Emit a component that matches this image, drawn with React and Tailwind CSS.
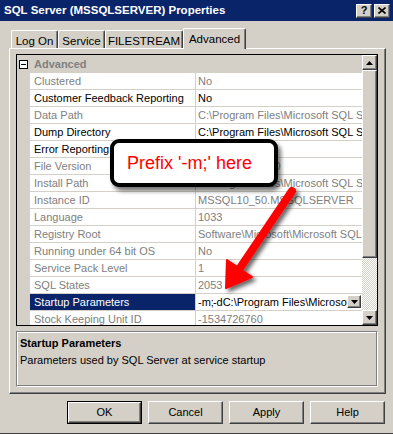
import React from 'react';

const FONT = { fontFamily: '"Liberation Sans", Arial, sans-serif' };

const rows = [
  ['Clustered', 'No', true],
  ['Customer Feedback Reporting', 'No', false],
  ['Data Path', 'C:\\Program Files\\Microsoft SQL Server\\MSSQL10_50.MSSQLSERVER\\MSSQL\\DATA', true],
  ['Dump Directory', 'C:\\Program Files\\Microsoft SQL Server\\MSSQL10_50.MSSQLSERVER\\MSSQL\\LOG', false],
  ['Error Reporting', 'No', false],
  ['File Version', '2009.100.2500.0', true],
  ['Install Path', 'C:\\Program Files\\Microsoft SQL Server\\MSSQL10_50.MSSQLSERVER\\MSSQL', true],
  ['Instance ID', 'MSSQL10_50.MSSQLSERVER', true],
  ['Language', '1033', true],
  ['Registry Root', 'Software\\Microsoft\\Microsoft SQL Server\\MSSQL10_50.MSSQLSERVER', true],
  ['Running under 64 bit OS', 'No', true],
  ['Service Pack Level', '1', true],
  ['SQL States', '2053', true],
];

// classic raised 3D box (buttons, thumbs)
const raised =
  'bg-[#d4d0c8] border border-t-white border-l-white border-r-[#404040] border-b-[#404040] shadow-[inset_-1px_-1px_#808080]';

function Arrow({ down }) {
  return (
    <svg width="7" height="4" viewBox="0 0 7 4">
      <path d={down ? 'M0 0h7L3.5 4z' : 'M0 4h7L3.5 0z'} fill="#000" />
    </svg>
  );
}

function Row({ label, value, gray }) {
  return (
    <div className="flex h-[17px] shrink-0">
      <div className="w-[13px] bg-[#d4d0c8]" />
      <div
        className={`w-[166px] pl-[4px] border-r border-b border-[#d4d0c8] bg-white leading-[16px] whitespace-nowrap overflow-hidden ${
          gray ? 'text-[#808080]' : 'text-black'
        }`}
      >
        {label}
      </div>
      <div
        className={`w-[166px] pl-[2px] border-b border-[#d4d0c8] bg-white leading-[16px] whitespace-nowrap overflow-hidden ${
          gray ? 'text-[#808080]' : 'text-black'
        }`}
      >
        {value}
      </div>
    </div>
  );
}

function Tab({ label, width, active }) {
  return (
    <div
      className={`flex items-start justify-center bg-[#d4d0c8] border-t border-l border-t-white border-l-white border-r border-r-[#404040] rounded-t-[2px] shadow-[inset_-1px_0_#808080] text-[11.5px] ${
        active ? 'h-[21px] -mb-px relative z-10 pt-[2px]' : 'h-[18px] pt-[2px]'
      }`}
      style={{ width }}
    >
      {label}
    </div>
  );
}

export default function App() {
  return (
    <div
      className="relative w-[393px] h-[434px] bg-[#d4d0c8] overflow-hidden flex flex-col text-[11px] text-black border-b border-b-[#404040]"
      style={FONT}
    >
      {/* title bar */}
      <div className="h-[21px] shrink-0 bg-[#0a246a] flex items-center pl-[4px] pr-[3px]">
        <span className="text-white font-bold text-[11.5px] flex-1">SQL Server (MSSQLSERVER) Properties</span>
        <div className={`${raised} w-[16px] h-[14px] flex items-center justify-center font-bold text-[11px] leading-none`}>?</div>
        <div className={`${raised} w-[16px] h-[14px] ml-[2px] flex items-center justify-center`}>
          <svg width="8" height="7" viewBox="0 0 8 7">
            <path d="M0.5 0.5L7.5 6.5M7.5 0.5L0.5 6.5" stroke="#000" strokeWidth="1.6" />
          </svg>
        </div>
      </div>

      {/* tabs */}
      <div className="mt-[7px] h-[20px] flex items-end pl-[11px] shrink-0">
        <Tab label="Log On" width={47} />
        <Tab label="Service" width={47} />
        <Tab label="FILESTREAM" width={78} />
        <Tab label="Advanced" width={63} active />
      </div>

      {/* tab page */}
      <div className="ml-[9px] w-[377px] h-[346px] shrink-0 flex flex-col gap-[5px] pt-[5px] pl-[6px] border border-t-white border-l-white border-r-[#404040] border-b-[#404040] shadow-[inset_-1px_-1px_#808080]">
        {/* property grid */}
        <div className="w-[362px] h-[272px] border border-black flex overflow-hidden bg-[#d4d0c8]">
          <div className="w-[345px] flex flex-col overflow-hidden">
            <div className="h-[18px] shrink-0 flex items-center bg-[#d4d0c8]">
              <div className="w-[13px] flex justify-center">
                <div className="w-[9px] h-[9px] border border-black bg-white flex items-center justify-center">
                  <div className="w-[5px] h-px bg-black" />
                </div>
              </div>
              <span className="pl-[4px] font-bold text-[#808080]">Advanced</span>
            </div>
            {rows.map(([l, v, g]) => (
              <Row key={l} label={l} value={v} gray={g} />
            ))}
            {/* selected row */}
            <div className="flex h-[17px] shrink-0">
              <div className="w-[13px] bg-[#d4d0c8]" />
              <div className="w-[166px] pl-[4px] border-r border-b border-[#d4d0c8] bg-[#0a246a] text-white leading-[16px] whitespace-nowrap overflow-hidden">
                Startup Parameters
              </div>
              <div className="w-[166px] flex border-b border-[#d4d0c8] bg-white">
                <div className="flex-1 pl-[2px] leading-[16px] whitespace-nowrap overflow-hidden flex items-center">
                  <span>-m;</span>
                  <span className="inline-block w-px h-[13px] bg-black -ml-px" />
                  <span>-dC:\Program Files\Microsoft SQL Server\MSSQL10_50</span>
                </div>
                <div className={`${raised} w-[14px] h-[13px] mt-[1px] mr-[1px] flex items-center justify-center`}>
                  <Arrow down />
                </div>
              </div>
            </div>
            <Row label="Stock Keeping Unit ID" value="-1534726760" gray />
          </div>

          {/* scrollbar */}
          <div className="w-[15px] flex flex-col">
            <div className={`${raised} h-[15px] shrink-0 flex items-center justify-center`}>
              <Arrow />
            </div>
            <div className={`${raised} h-[188px] shrink-0`} />
            <div className="flex-1 bg-[repeating-conic-gradient(#d4d0c8_0_25%,#ffffff_0_50%)] bg-[length:2px_2px]" />
            <div className={`${raised} h-[15px] shrink-0 flex items-center justify-center`}>
              <Arrow down />
            </div>
          </div>
        </div>

        {/* description */}
        <div className="w-[362px] h-[56px] border border-t-[#808080] border-l-[#808080] border-r-white border-b-white shadow-[inset_-1px_-1px_#808080,inset_1px_1px_#ffffff] px-[3px] pt-[3px]">
          <div className="font-bold leading-[16px]">Startup Parameters</div>
          <div className="leading-[16px] mt-[1px]">Parameters used by SQL Server at service startup</div>
        </div>
      </div>

      {/* buttons */}
      <div className="mt-[7px] flex justify-end gap-[6px] pr-[8px]">
        <div className="border border-black">
          <div className={`${raised} w-[73px] h-[21px] flex items-center justify-center`}>OK</div>
        </div>
        {['Cancel', 'Apply', 'Help'].map((b) => (
          <div key={b} className={`${raised} w-[75px] h-[23px] flex items-center justify-center`}>
            {b}
          </div>
        ))}
      </div>

      {/* annotation callout */}
      <div className="absolute left-[110px] top-[139px] w-[168px] h-[48px] bg-white border-[4px] border-black rounded-[9px] shadow-[3px_4px_4px_rgba(0,0,0,0.55)] flex items-center pl-[13px]">
        <span className="text-[#ff0000] text-[18px] leading-none">Prefix '-m;' here</span>
      </div>

      {/* annotation arrow */}
      <svg className="absolute left-0 top-0 pointer-events-none" width="393" height="434" viewBox="0 0 393 434">
        <defs>
          <filter id="sh" x="-20%" y="-20%" width="150%" height="150%">
            <feDropShadow dx="3" dy="3" stdDeviation="2" floodColor="#000" floodOpacity="0.6" />
          </filter>
        </defs>
        <g filter="url(#sh)">
          <line x1="292" y1="191" x2="240" y2="268" stroke="#ff0000" strokeWidth="8" strokeLinecap="round" />
          <path d="M226 288L227 260L252 277Z" fill="#ff0000" stroke="#ff0000" strokeWidth="2" strokeLinejoin="round" />
        </g>
      </svg>
    </div>
  );
}
